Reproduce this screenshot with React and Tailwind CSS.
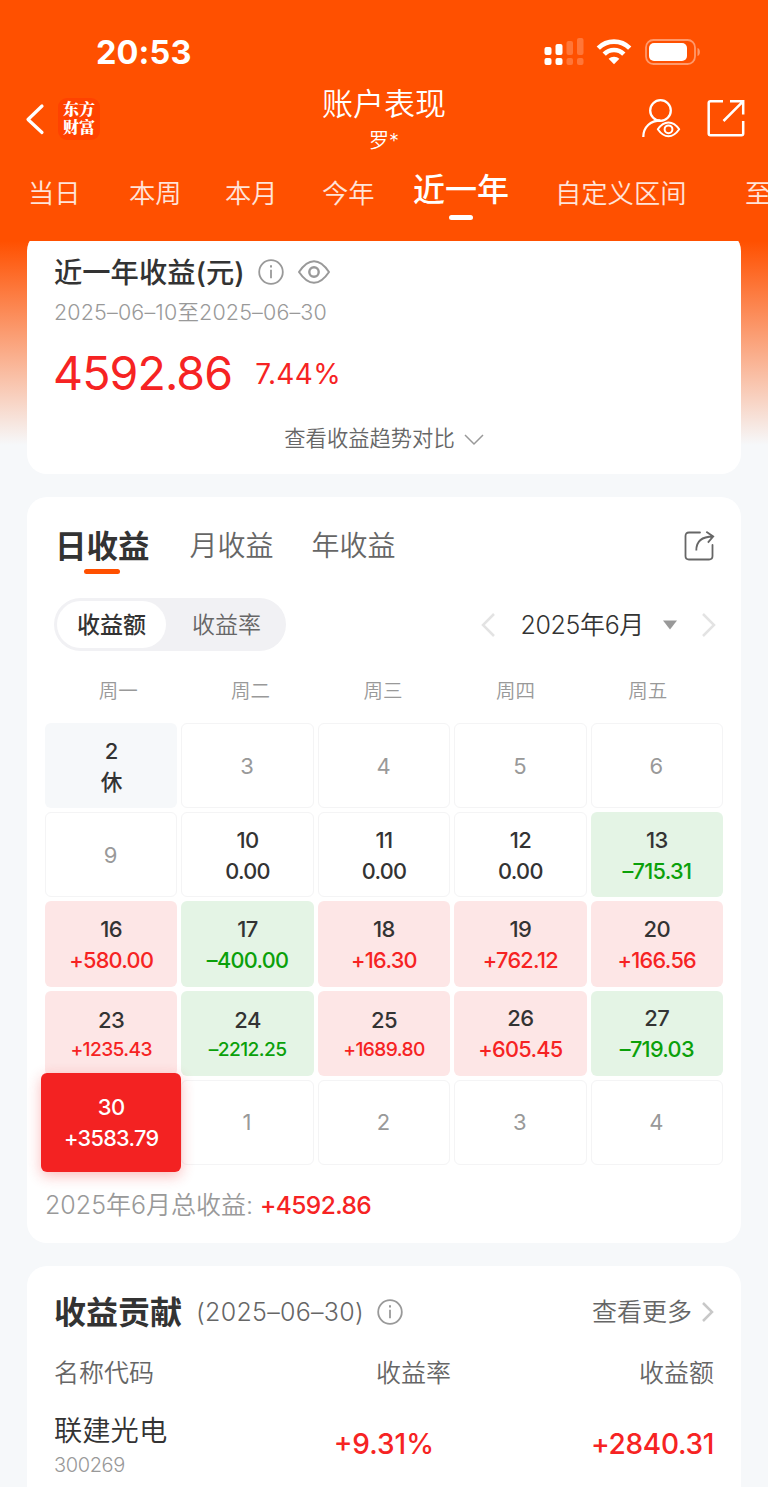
import React, { useState } from 'react';

const PERIODS = [
  { label: '当日', className: 'w-[101px]' },
  { label: '本周', className: 'w-[96px]' },
  { label: '本月', className: 'w-[97px]' },
  { label: '今年', className: 'w-[91px]' },
  { label: '近一年', className: 'w-[142px]' },
  { label: '自定义区间', className: 'w-[190px]' },
  { label: '至今', className: 'w-[60px]' },
];

const WEEKDAYS = ['周一', '周二', '周三', '周四', '周五'];

const DAYS = [
  { day: 2, rest: true }, { day: 3 }, { day: 4 }, { day: 5 }, { day: 6 },
  { day: 9 }, { day: 10, value: 0 }, { day: 11, value: 0 }, { day: 12, value: 0 }, { day: 13, value: -715.31 },
  { day: 16, value: 580 }, { day: 17, value: -400 }, { day: 18, value: 16.3 }, { day: 19, value: 762.12 }, { day: 20, value: 166.56 },
  { day: 23, value: 1235.43 }, { day: 24, value: -2212.25 }, { day: 25, value: 1689.8 }, { day: 26, value: 605.45 }, { day: 27, value: -719.03 },
  { day: 30, value: 3583.79 }, { day: 1 }, { day: 2 }, { day: 3 }, { day: 4 },
];

const HOLDINGS = [
  { name: '联建光电', code: '300269', rate: '+9.31%', amount: '+2840.31' },
];

const formatValue = (value) => {
  const text = Math.abs(value).toFixed(2);
  if (value > 0) return `+${text}`;
  if (value < 0) return `–${text}`;
  return text;
};

const InfoIcon = () => (
  <svg className="w-[26px] h-[26px] shrink-0" viewBox="0 0 26 26" fill="none" stroke="#999" strokeWidth="1.8">
    <circle cx="13" cy="13" r="11.8" />
    <path d="M13 10.8v8.4" />
    <path d="M13 6.3v2.3" strokeWidth="2" />
  </svg>
);

const StatusBar = () => (
  <div className="flex items-center justify-between h-[38px] mt-[33px] pl-[96px] pr-[67px]">
    <span className="text-[32.5px] font-bold leading-[38px] tracking-[0.1px] pt-[2px]">20:53</span>
    <div className="flex items-center">
      <svg className="w-[40px] h-[28px]" viewBox="0 0 40 28" fill="#fff">
        <rect x="0.5" y="9" width="7" height="8" rx="2" />
        <rect x="11.5" y="6" width="7" height="11" rx="2" />
        <rect x="22.5" y="3" width="6.5" height="14" rx="2" opacity=".22" />
        <rect x="33" y="0" width="6.5" height="17" rx="2" opacity=".22" />
        <rect x="0.5" y="20" width="7" height="7" rx="2" />
        <rect x="11.5" y="20" width="7" height="7" rx="2" />
        <rect x="22.5" y="20" width="6.5" height="7" rx="2" opacity=".22" />
        <rect x="33" y="20" width="6.5" height="7" rx="2" opacity=".22" />
      </svg>
      <svg className="w-[36px] h-[26px] ml-[12px]" viewBox="0 0 36 26" fill="none" stroke="#fff" strokeWidth="4.6">
        <path d="M2.3 9.2a22 22 0 0 1 31.4 0" />
        <path d="M8.2 15.2a13.600 13.600 0 0 1 19.600 0" />
        <path d="M18 25.3l-5.4-5.5a7.800 7.800 0 0 1 10.800 0z" fill="#fff" stroke="none" />
      </svg>
      <svg className="w-[56px] h-[26px] ml-[13px]" viewBox="0 0 56 26" fill="none">
        <rect x="1" y="1" width="49" height="24" rx="7.5" stroke="#fff" strokeWidth="1.8" opacity=".42" />
        <rect x="4" y="4" width="38" height="18" rx="5" fill="#fff" />
        <path d="M52.5 9v8c3.200-1 3.200-7 0-8z" fill="#fff" opacity=".42" />
      </svg>
    </div>
  </div>
);

const Header = ({ period, setPeriod }) => (
  <header className="relative z-10 h-[241px] bg-[#ff5000] text-white flex flex-col overflow-hidden">
    <StatusBar />

    <div className="grid grid-cols-[1fr_160px_1fr] h-[82px] mt-[11px]">
      <div className="flex items-center pl-[25px] pb-[9px]">
        <svg className="w-[20px] h-[32px] shrink-0" viewBox="0 0 20 32" fill="none" stroke="#fff" strokeWidth="3.2" strokeLinecap="round" strokeLinejoin="round">
          <path d="M17 3L3 16.500 17 29.500" />
        </svg>
        <div className="w-[42px] h-[42px] ml-[13px] rounded-[9px] bg-[#ff4200] flex items-center justify-center">
          <span className="font-['Noto_Serif_CJK_SC','Noto_Sans_CJK_SC',serif] font-black text-[16px] leading-[18px] -mt-[1px]">东方<br />财富</span>
        </div>
      </div>
      <div className="flex flex-col items-center pt-[1px]">
        <h1 className="text-[31px] leading-[42px] font-[350] whitespace-nowrap">账户表现</h1>
        <p className="text-[20px] leading-[32px] font-[350]">罗*</p>
      </div>
      <div className="flex items-start justify-end pt-[16px] pr-[22px]">
        <svg className="w-[40px] h-[40px]" viewBox="0 0 40 40" fill="none" stroke="#fff" strokeWidth="2.3">
          <circle cx="19.500" cy="12.500" r="10.300" />
          <path d="M2.300 39C2.300 29 9.500 22.500 19.500 22.500" />
          <path d="M16.800 31.300c3.500-5 7-6.800 10.700-6.800s7.200 1.800 10.700 6.800c-3.500 5-7 7-10.700 7s-7.200-2-10.700-7z" strokeLinejoin="round" strokeWidth="2" />
          <circle cx="27.500" cy="31.300" r="3.900" strokeWidth="2" />
        </svg>
        <svg className="w-[40px] h-[40px] ml-[25px]" viewBox="0 0 40 40" fill="none" stroke="#fff" strokeWidth="2.5">
          <path d="M17 3.200H4.500Q2.700 3.200 2.700 5v30.500Q2.700 37.300 4.500 37.300h31Q37.200 37.300 37.200 35.500V23" />
          <path d="M24 3.200h13.200V16.500M36.800 3.600L17.500 23" />
        </svg>
      </div>
    </div>

    <nav className="flex items-start pl-[28px] whitespace-nowrap">
      {PERIODS.map((p, index) => (
        <button key={p.label} onClick={() => setPeriod(index)} className={`${p.className} shrink-0 flex`}>
          {period === index ? (
            <span className="flex flex-col items-center">
              <span className="text-[32px] leading-[50px] pt-[1px] font-medium">{p.label}</span>
              <span className="w-[24px] h-[5px] rounded-full bg-white" />
            </span>
          ) : (
            <span className="text-[26.3px] leading-[60px] font-[350] text-white/85">{p.label}</span>
          )}
        </button>
      ))}
    </nav>
  </header>
);

const SummaryCard = () => (
  <section className="h-[243px] -mt-[10px] rounded-[20px] bg-white px-[27px] flex flex-col">
    <div className="flex items-center h-[42px] mt-[20px]">
      <h2 className="text-[28.3px] leading-[42px] font-medium text-[#333] pt-[1px]">近一年收益(元)</h2>
      <span className="ml-[13px]"><InfoIcon /></span>
      <svg className="w-[34px] h-[26px] ml-[13px]" viewBox="0 0 34 26" fill="none" stroke="#999" strokeWidth="2">
        <path d="M2 13C7 5.500 12 2.200 17 2.200S27 5.500 32 13c-5 7.500-10 10.800-15 10.800S7 20.500 2 13z" strokeLinejoin="round" />
        <circle cx="17" cy="13" r="4.700" strokeWidth="2.4" />
      </svg>
    </div>
    <p className="text-[21.5px] leading-[32px] h-[32px] mt-[3px] font-[350] tracking-[0.15px] text-[#999] whitespace-nowrap">2025–06–10至2025–06–30</p>
    <div className="flex items-center h-[60px] mt-[15px] text-[#f62323]">
      <span className="text-[46.5px] leading-[60px] tracking-[-0.9px] -ml-[1px]">4592.86</span>
      <span className="text-[28px] leading-[60px] ml-[23px] pt-[2px] tracking-[0.4px]">7.44%</span>
    </div>
    <button className="flex items-center justify-center h-[32px] mt-[19px]">
      <span className="text-[21.3px] leading-[32px] font-[350] text-[#666]">查看收益趋势对比</span>
      <svg className="w-[20px] h-[12px] ml-[9px] mt-[3px]" viewBox="0 0 20 12" fill="none" stroke="#999" strokeWidth="1.5">
        <path d="M1 1l9 9 9-9" />
      </svg>
    </button>
  </section>
);

const DayCell = ({ item }) => {
  const { day, value, rest } = item;
  const isSelected = day === 30;
  const hasValue = value !== undefined;

  let tone = 'border border-[#f4f4f5] bg-white';
  let valueColor = 'text-[#333]';
  if (rest) tone = 'bg-[#f6f8fa]';
  if (value > 0) {
    tone = 'bg-[#fde6e6]';
    valueColor = 'text-[#f62323]';
  }
  if (value < 0) {
    tone = 'bg-[#e4f4e5]';
    valueColor = 'text-[#0aa00a]';
  }
  if (isSelected) {
    tone = 'bg-[#f32222] -mx-[4px] -my-[7px] z-10 relative shadow-[0_4px_14px_rgba(243,34,34,0.3)]';
    valueColor = 'text-white';
  }

  if (!hasValue && !rest) {
    return (
      <div className={`${tone} rounded-[6px] flex items-center justify-center text-[22px] text-[#999] pt-[1px] pr-[1px]`}>{day}</div>
    );
  }

  // Amounts in the thousands shrink so they stay inside the cell
  const isLong = Math.abs(value) >= 1000 && !isSelected;

  return (
    <div className={`${tone} rounded-[6px] flex flex-col items-center justify-center font-medium pt-[2px]`}>
      <span className={`text-[22px] leading-[31px] tracking-[-0.6px] ${isLong ? 'pt-[2px] -mb-[2px]' : ''} ${isSelected ? 'text-white' : 'text-[#333]'}`}>{day}</span>
      <span className={`leading-[31px] ${isLong ? 'text-[19.2px] tracking-[-0.6px]' : 'text-[21.7px] tracking-[-0.7px]'} ${valueColor}`}>
        {rest ? '休' : formatValue(value)}
      </span>
    </div>
  );
};

const CalendarCard = () => {
  const [mode, setMode] = useState('amount');

  return (
    <section className="h-[746px] mt-[23px] rounded-[20px] bg-white flex flex-col">
      <div className="flex items-start h-[81px] pl-[28px] pr-[26px] pt-[24px]">
        <button className="flex flex-col items-center">
          <span className="text-[31.5px] leading-[50px] pt-[1px] font-bold text-[#333]">日收益</span>
          <span className="w-[36px] h-[5px] rounded-full bg-[#ff5000] -mt-[3px]" />
        </button>
        <button className="text-[28px] leading-[50px] font-[350] text-[#666] ml-[40px]">月收益</button>
        <button className="text-[28px] leading-[50px] font-[350] text-[#666] ml-[38px]">年收益</button>
        <svg className="w-[32px] h-[32px] ml-auto mt-[9px]" viewBox="0 0 32 32" fill="none" stroke="#666" strokeWidth="1.8">
          <path d="M17 2.500H6Q2.500 2.500 2.500 6v20q0 3.500 3.500 3.500h20q3.500 0 3.500-3.500V15" strokeLinecap="round" />
          <path d="M13.300 20.500C13.300 12 18.500 6.500 30 6.500M23.300 1.800l6.900 4.600-5.300 6.200" />
        </svg>
      </div>

      <div className="flex items-center h-[53px] mt-[20px] pl-[27px] pr-[25px]">
        <div className="flex items-center w-[232px] h-[53px] rounded-full bg-[#f1f1f4] p-[3px]">
          <button onClick={() => setMode('amount')} className={`w-[109px] h-[47px] rounded-full text-[23px] leading-[49px] ${mode === 'amount' ? 'bg-white font-medium text-[#333]' : 'font-[350] text-[#666]'}`}>收益额</button>
          <button onClick={() => setMode('rate')} className={`flex-1 h-[47px] pl-[4px] rounded-full text-[23px] leading-[49px] ${mode === 'rate' ? 'bg-white font-medium text-[#333]' : 'font-[350] text-[#666]'}`}>收益率</button>
        </div>
        <div className="flex items-center ml-auto">
          <svg className="w-[14px] h-[24px]" viewBox="0 0 14 24" fill="none" stroke="#e3e3e3" strokeWidth="2.5">
            <path d="M13 1L2 12l11 11" />
          </svg>
          <span className="text-[25px] leading-[36px] font-[350] tracking-[-0.35px] text-[#333] ml-[25px] pt-[1px] whitespace-nowrap">2025年6月</span>
          <svg className="w-[14px] h-[10px] ml-[19px]" viewBox="0 0 14 10" fill="#999">
            <path d="M0 .5h14L7 9.500z" />
          </svg>
          <svg className="w-[14px] h-[24px] ml-[25px]" viewBox="0 0 14 24" fill="none" stroke="#e3e3e3" strokeWidth="2.5">
            <path d="M1 1l11 11L1 23" />
          </svg>
        </div>
      </div>

      <div className="grid grid-cols-5 h-[30px] mt-[25px] ml-[25px] mr-[27px]">
        {WEEKDAYS.map(day => (
          <span key={day} className="text-center text-[19.5px] leading-[30px] font-[350] text-[#999]">{day}</span>
        ))}
      </div>

      <div className="grid grid-cols-5 grid-rows-5 gap-[4px] h-[442px] mt-[17px] mx-[18px] shrink-0">
        {DAYS.map((item, index) => <DayCell key={index} item={item} />)}
      </div>

      <p className="flex items-center pl-[18px] mt-[22px] h-[36px] text-[25px] leading-[36px] whitespace-nowrap">
        <span className="font-[350] text-[#999]">2025年6月总收益:</span>
        <span className="ml-[7px] font-medium text-[24.5px] tracking-[-0.6px] text-[#f62323]">+4592.86</span>
      </p>
    </section>
  );
};

const ContributionCard = () => (
  <section className="h-[221px] mt-[23px] rounded-t-[20px] bg-white px-[27px] flex flex-col">
    <div className="flex items-center h-[48px] mt-[22px]">
      <h2 className="text-[32px] leading-[48px] font-bold text-[#333] pt-[1px]">收益贡献</h2>
      <span className="text-[25px] leading-[48px] font-[350] tracking-[0.3px] text-[#666] ml-[14px] whitespace-nowrap">(2025–06–30)</span>
      <span className="ml-[13px]"><InfoIcon /></span>
      <button className="flex items-center ml-auto">
        <span className="text-[25px] leading-[48px] font-[350] text-[#666]">查看更多</span>
        <svg className="w-[12px] h-[20px] ml-[10px]" viewBox="0 0 12 20" fill="none" stroke="#c8c8c8" strokeWidth="2.5">
          <path d="M1 1l9 9-9 9" />
        </svg>
      </button>
    </div>

    <div className="grid grid-cols-[190px_1fr_200px] mt-[19px] text-[25px] leading-[36px] font-[350] text-[#666]">
      <span>名称代码</span>
      <span className="text-right pr-[63px]">收益率</span>
      <span className="text-right">收益额</span>
    </div>

    {HOLDINGS.map(item => (
      <div key={item.code} className="grid grid-cols-[190px_1fr_200px] items-center mt-[18px]">
        <div className="flex flex-col">
          <span className="text-[28.3px] leading-[44px] font-[350] text-[#333]">{item.name}</span>
          <span className="text-[20px] leading-[24px] font-[350] tracking-[-0.4px] text-[#999]">{item.code}</span>
        </div>
        <span className="text-right pr-[80px] pt-[2px] text-[28px] font-medium text-[#f62323] whitespace-nowrap">{item.rate}</span>
        <span className="text-right pt-[2px] text-[28px] tracking-[-0.3px] font-medium text-[#f62323]">{item.amount}</span>
      </div>
    ))}
  </section>
);

const App = () => {
  const [period, setPeriod] = useState(4);

  return (
    <div className="w-[768px] h-[1487px] overflow-hidden bg-[#f6f8fa] font-['Inter','Noto_Sans_CJK_SC',sans-serif]">
      <Header period={period} setPeriod={setPeriod} />
      <main className="flex flex-col px-[27px] bg-[linear-gradient(to_bottom,#ff5000_0px,#f6f8fa_204px)]">
        <SummaryCard />
        <CalendarCard />
        <ContributionCard />
      </main>
    </div>
  );
};

export default App;
